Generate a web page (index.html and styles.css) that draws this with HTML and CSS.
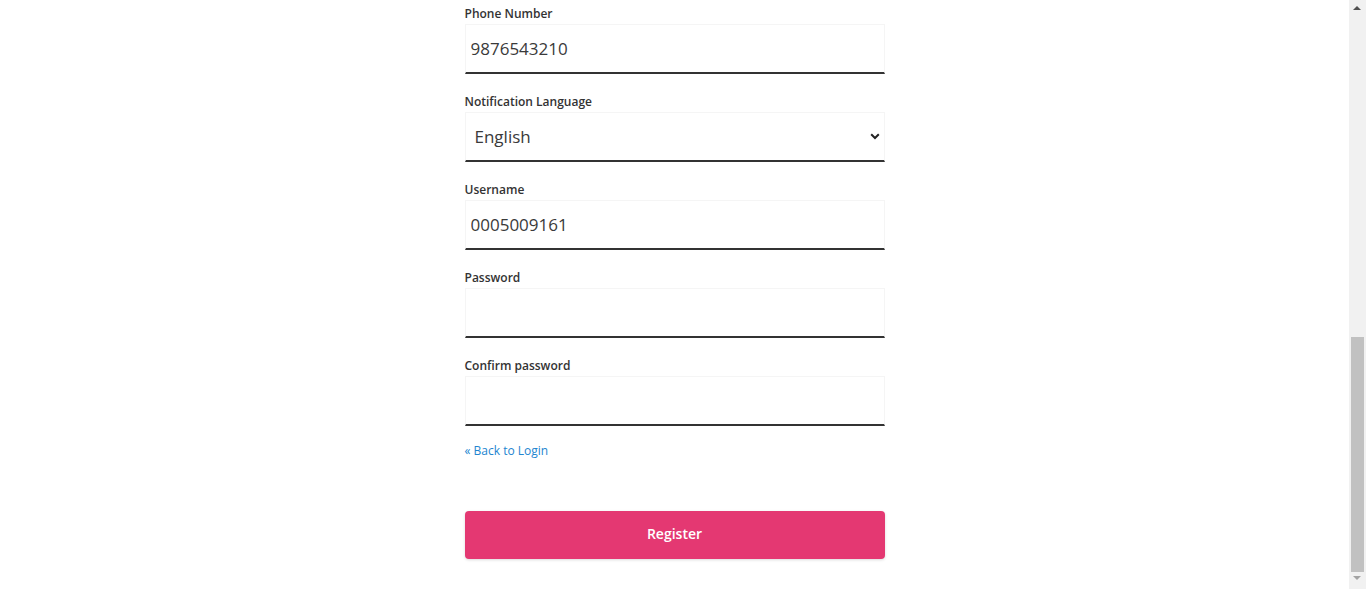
FILE: index.html
```html
<!DOCTYPE html>
<html lang="en">
<head>
<meta charset="utf-8">
<title>Register</title>
<link rel="stylesheet" href="styles.css">
</head>
<body>
<div class="page">
  <form class="form">
    <div class="field">
      <label class="label" for="phone">Phone Number</label>
      <input class="input" id="phone" type="text" value="9876543210">
    </div>
    <div class="field">
      <label class="label" for="lang">Notification Language</label>
      <div class="select-wrap">
        <select class="input select" id="lang">
          <option>English</option>
        </select>
        <svg class="chev" width="10" height="7" viewBox="0 0 10 7"><path d="M1.2 1.3 5 5 8.8 1.3" fill="none" stroke="#222" stroke-width="2"/></svg>
      </div>
    </div>
    <div class="field">
      <label class="label" for="user">Username</label>
      <input class="input" id="user" type="text" value="0005009161">
    </div>
    <div class="field">
      <label class="label" for="pw">Password</label>
      <input class="input" id="pw" type="password">
    </div>
    <div class="field">
      <label class="label" for="pw2">Confirm password</label>
      <input class="input" id="pw2" type="password">
    </div>
    <a class="back" href="#">« Back to Login</a>
    <button class="btn" type="button">Register</button>
  </form>
</div>
<div class="scrollbar">
  <span class="arrow up"></span>
  <span class="thumb"></span>
  <span class="arrow down"></span>
</div>
</body>
</html>
```
FILE: styles.css
```css
* { box-sizing: border-box; }
html, body { margin: 0; height: 100%; overflow: hidden; background: #fff; }
body { font-family: "Open Sans", "Noto Sans", sans-serif; color: #333; }
.page { width: 1349px; display: flex; justify-content: center; padding-top: 5px; }
.form { width: 420px; display: flex; flex-direction: column; }
.field { display: flex; flex-direction: column; margin-bottom: 19px; }
.label { font-size: 12px; font-weight: 600; line-height: 17px; color: #333; margin-bottom: 2px; }
.input {
  height: 50px; width: 100%; border: 1px solid #f5f5f5; border-bottom: 2px solid #333;
  font-family: inherit; font-size: 17px; color: #3a3a3a; padding: 0 0 0 5px; margin: 0;
  background: #fff; outline: none; border-radius: 0;
}
.select-wrap { position: relative; }
.select { appearance: none; -webkit-appearance: none; padding-left: 9px; }
.chev { position: absolute; right: 5px; top: 21px; }
.back { font-size: 12px; line-height: 17px; color: #2385cf; text-decoration: none; margin-top: -3px; align-self: flex-start; }
.btn {
  margin-top: 52px; height: 48px; width: 100%; border: 0; border-radius: 4px;
  background: #e43872; color: #fff; font-family: inherit; font-size: 14px; font-weight: 600;
  padding: 0 0 3px; box-shadow: 0 1px 3px rgba(0,0,0,0.15);
}
.scrollbar { position: fixed; top: 0; right: 0; width: 17px; height: 589px; background: #f1f1f1; }
.thumb { position: absolute; left: 2px; width: 13px; top: 337px; height: 235px; background: #c1c1c1; }
.arrow { position: absolute; left: 4px; width: 0; height: 0; border-left: 4px solid transparent; border-right: 4px solid transparent; }
.arrow.up { top: 6px; border-bottom: 4px solid #505050; }
.arrow.down { top: 576px; border-top: 4px solid #a3a3a3; }
```
